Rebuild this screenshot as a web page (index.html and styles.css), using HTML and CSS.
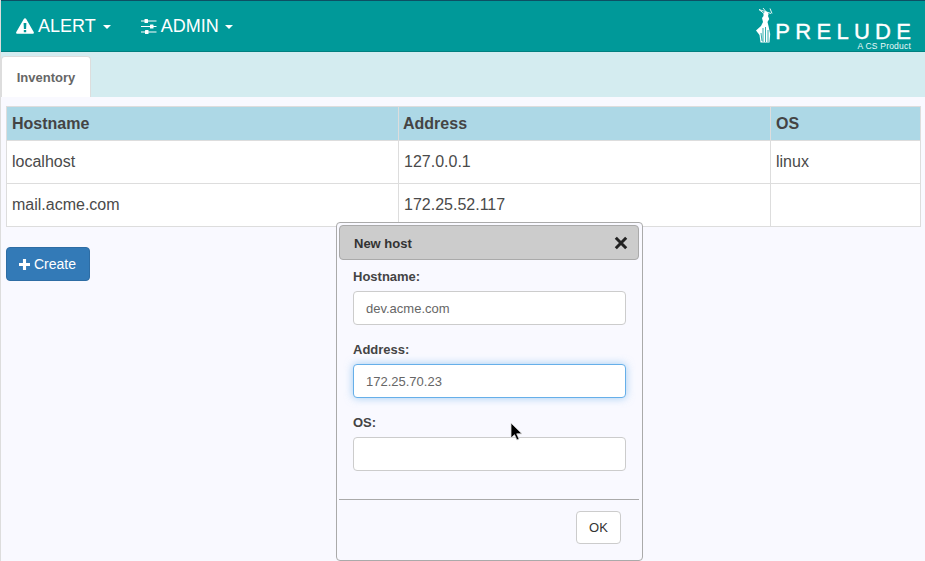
FILE: index.html
```html
<!DOCTYPE html>
<html lang="en">
<head>
<meta charset="utf-8">
<title>Prelude Inventory</title>
<link rel="stylesheet" href="styles.css">
</head>
<body>
<header class="navbar">
  <nav class="nav-left">
    <a class="nav-item nav-alert">
      <svg class="icon-alert" viewBox="0 0 18 16" width="18" height="16"><path fill="#fff" fill-rule="evenodd" d="M9 .3c.5 0 .9.3 1.200.7l7.500 13c.5.900-.1 1.800-1.100 1.800H1.400C.4 15.800-.2 14.900.3 14L7.800 1C8.100.6 8.500.3 9 .3zM7.600 5l.3 6h2.200l.3-6zM7.800 12v2.300h2.400V12z"/></svg>
      <span>ALERT</span><i class="caret"></i>
    </a>
    <a class="nav-item">
      <svg class="icon-sliders" viewBox="0 0 16 15" width="16" height="15"><g fill="#fff"><rect x="0" y="1.500" width="15.500" height="1"/><rect x="3.500" y="0" width="3.500" height="4" rx=".5"/><rect x="0" y="7" width="15.500" height="1"/><rect x="9" y="5.500" width="3.500" height="4" rx=".5"/><rect x="0" y="12.500" width="15.500" height="1"/><rect x="4" y="11" width="3.500" height="4" rx=".5"/></g></svg>
      <span>ADMIN</span><i class="caret caret-admin"></i>
    </a>
  </nav>
  <div class="logo">
    <svg class="logo-figure" viewBox="0 0 20 36" width="20" height="36">
      <path fill="#fff" d="M7.500 6a2.500 2.500 0 0 1 5 .5L12 8l1.200 3-1.700 3 1 4 1.700 8-.7 8.500H4.500L3.500 27 0 22.500l5-4.500 2-4-1-4 1.500-2z"/>
      <path d="M3 1.500l12 4M7 0l4 5M14 .5l2 5M3 1.500l5 4" stroke="#fff" stroke-width=".9" fill="none"/>
      <path d="M7 20v14M9.500 19v15M12 22v12M5 25l1 8" stroke="#009999" stroke-width=".8" fill="none"/>
    </svg>
    <div class="logo-text">
      <div class="logo-name">PRELUDE</div>
      <div class="logo-sub">A CS Product</div>
    </div>
  </div>
</header>
<div class="tabbar">
  <div class="tab">Inventory</div>
</div>
<main class="content">
  <table class="grid">
    <colgroup><col class="col-host"><col class="col-addr"><col class="col-os"></colgroup>
    <thead>
      <tr><th>Hostname</th><th class="th-addr">Address</th><th>OS</th></tr>
    </thead>
    <tbody>
      <tr><td>localhost</td><td>127.0.0.1</td><td>linux</td></tr>
      <tr><td>mail.acme.com</td><td>172.25.52.117</td><td></td></tr>
    </tbody>
  </table>
  <button class="btn-create"><svg viewBox="0 0 12 12" width="11" height="11"><path fill="#fff" d="M4.300 0h3.400v4.300H12v3.400H7.700V12H4.300V7.700H0V4.300h4.300z"/></svg> Create</button>
</main>
<section class="dialog">
  <div class="dialog-title">
    <span>New host</span>
    <svg class="close" viewBox="0 0 14 14" width="14" height="14"><path d="M1.800 1.800l10.400 10.400M12.200 1.800L1.800 12.200" stroke="#222" stroke-width="3" fill="none"/></svg>
  </div>
  <form class="dialog-body">
    <label class="field-label">Hostname:</label>
    <div class="input">dev.acme.com</div>
    <label class="field-label">Address:</label>
    <div class="input focus">172.25.70.23</div>
    <label class="field-label">OS:</label>
    <div class="input"></div>
  </form>
  <div class="dialog-footer"><button class="btn-ok">OK</button></div>
</section>
<svg class="cursor" viewBox="0 0 13 20" width="13" height="20"><path d="M1 1v15l3.500-3.300 2.400 5.300 2.200-1-2.400-5.200H12z" fill="#000" stroke="#ddd" stroke-width=".8"/></svg>
</body>
</html>
```
FILE: styles.css
```css
* { box-sizing: border-box; }
html, body { margin: 0; height: 561px; overflow: hidden; }
body {
  position: relative;
  background: #f9f9ff;
  font-family: "Liberation Sans", Arial, sans-serif;
  color: #333;
  font-size: 16px;
  border-left: 1px solid #ddd;
}
.navbar {
  height: 52px;
  background: #009999;
  border-top: 1px solid #0d4f63;
  border-bottom: 1px solid #008080;
  border-left: 1px solid #6f8f8f;
  display: flex;
  justify-content: space-between;
  color: #fff;
  margin-left: -1px;
}
.nav-left { display: flex; padding-left: 15px; }
.nav-item { display: flex; align-items: center; color: #fff; font-size: 18px; height: 50px; }
.nav-alert { margin-right: 30px; }
.icon-alert { margin-right: 4px; }
.icon-sliders { margin-right: 4px; }
.caret {
  display: inline-block;
  margin-left: 7px;
  border-top: 4px solid #fff;
  border-left: 4px solid transparent;
  border-right: 4px solid transparent;
  margin-top: 2px;
}
.caret-admin { margin-left: 6px; }
.logo { display: flex; padding: 7px 14px 0 0; }
.logo-figure { margin-right: -1px; }
.logo-name {
  font-size: 22px;
  letter-spacing: 5.300px;
  margin-right: -5.300px;
  line-height: 21px;
  margin-top: 13px;
  -webkit-text-stroke: .4px #fff;
}
.logo-sub { font-size: 8.500px; letter-spacing: .2px; line-height: 7px; margin-top: 1px; text-align: right; color: #eafafa; }
.tabbar {
  height: 45px;
  background: #d4ecf0;
  padding-top: 4px;
}
.tab {
  width: 90px;
  height: 41px;
  background: #fff;
  border: 1px solid #ddd;
  border-bottom: 0;
  border-radius: 4px 4px 0 0;
  font-size: 13px;
  font-weight: 700;
  color: #666;
  text-align: center;
  line-height: 42px;
}
.content { padding: 9px 4px 0 5px; }
.grid { width: 915px; border-collapse: collapse; table-layout: fixed; background: #fff; }
.col-host { width: 392px; }
.col-addr { width: 372px; }
.grid th, .grid td { border: 1px solid #ddd; padding: 0 5px; text-align: left; font-size: 16px; }
.grid th { background: #add8e6; font-weight: 700; height: 34px; color: #444; }
.grid .th-addr { padding-left: 4px; }
.grid td { height: 43px; color: #4a4a4a; }
.btn-create {
  display: flex;
  align-items: center;
  gap: 4px;
  margin-top: 20px;
  width: 84px;
  height: 34px;
  padding: 0 0 0 12px;
  background: #337ab7;
  border: 1px solid #2e6da4;
  border-radius: 4px;
  color: #fff;
  font: 14px "Liberation Sans", Arial, sans-serif;
}
.dialog {
  position: absolute;
  left: 335px;
  top: 222px;
  width: 307px;
  height: 339px;
  background: #f9f9ff;
  border: 1px solid #aaa;
  border-radius: 4px;
  padding: 2px 3px 2px 2px;
}
.dialog-title {
  height: 35px;
  background: #ccc;
  border: 1px solid #aaa;
  border-radius: 4px;
  display: flex;
  justify-content: space-between;
  align-items: center;
  padding: 1px 10px 0 14px;
  font-size: 13px;
  font-weight: 700;
  color: #333;
}
.dialog-body { padding: 0 13px 0 14px; height: 240px; border-bottom: 1px solid #aaa; }
.field-label { display: block; font-size: 13px; font-weight: 700; color: #444; height: 31px; padding-top: 9px; line-height: 15px; }
.input {
  height: 34px;
  background: #fff;
  border: 1px solid #ccc;
  border-radius: 4px;
  padding: 1px 12px 0;
  font-size: 13px;
  line-height: 32px;
  color: #666;
  margin-bottom: 8px;
}
.input.focus { border-color: #66afe9; box-shadow: 0 0 8px rgba(102,175,233,.6); }
.dialog-footer { display: flex; justify-content: flex-end; padding: 11px 18px 0 0; }
.btn-ok {
  width: 45px;
  height: 33px;
  background: #fff;
  border: 1px solid #ccc;
  border-radius: 4px;
  font: 13px "Liberation Sans", Arial, sans-serif;
  color: #333;
}
.cursor { position: absolute; left: 509px; top: 422px; }
```
